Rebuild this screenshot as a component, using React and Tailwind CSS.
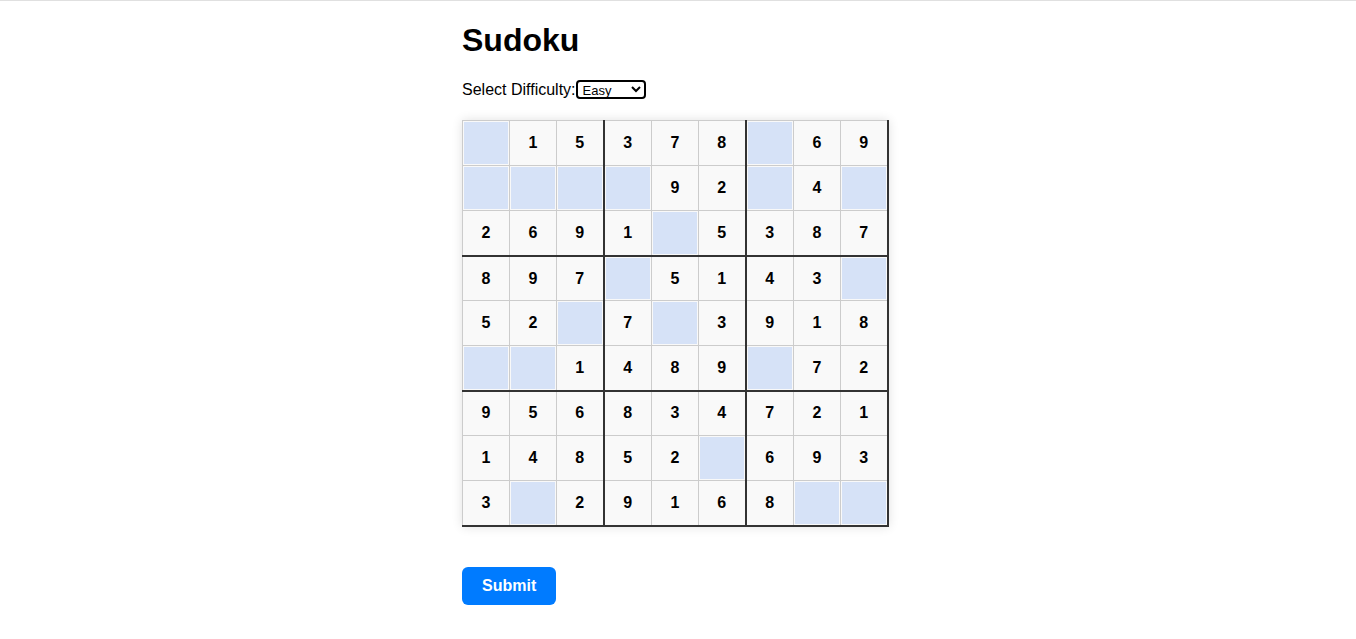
import { useState } from "react";

const puzzle = [
  [0, 1, 5, 3, 7, 8, 0, 6, 9],
  [0, 0, 0, 0, 9, 2, 0, 4, 0],
  [2, 6, 9, 1, 0, 5, 3, 8, 7],
  [8, 9, 7, 0, 5, 1, 4, 3, 0],
  [5, 2, 0, 7, 0, 3, 9, 1, 8],
  [0, 0, 1, 4, 8, 9, 0, 7, 2],
  [9, 5, 6, 8, 3, 4, 7, 2, 1],
  [1, 4, 8, 5, 2, 0, 6, 9, 3],
  [3, 0, 2, 9, 1, 6, 8, 0, 0],
];

export default function App() {
  const [difficulty, setDifficulty] = useState("easy");
  const [values, setValues] = useState({});

  return (
    <div className="min-h-screen bg-white border-t border-[#e0e0e0] font-['Liberation_Sans',Arial,sans-serif] text-black">
      <div className="w-[432px] mx-auto pt-[21px]">
        <h1 className="text-[32px] leading-[37px] font-bold">Sudoku</h1>

        {/* difficulty picker */}
        <div className="mt-[21px] flex items-center text-base leading-[18px]">
          <label htmlFor="difficulty">Select Difficulty:</label>
          <select
            id="difficulty"
            value={difficulty}
            onChange={(e) => setDifficulty(e.target.value)}
            className="w-[70px] h-[19px] border-2 border-black rounded-[4px] text-[13px] leading-[15px] bg-white pl-[1px] appearance-auto"
          >
            <option value="easy">Easy</option>
            <option value="medium">Medium</option>
            <option value="hard">Hard</option>
          </select>
        </div>

        <table className="mt-[21px] border-collapse shadow-[0_0_10px_rgba(0,0,0,0.12)]">
          <tbody>
            {puzzle.map((row, r) => (
              <tr key={r}>
                {row.map((n, c) => {
                  const thickRight = c % 3 === 2;
                  const thickBottom = r % 3 === 2;
                  const wide = c === 3 || c === 6;
                  const short = r === 3 || r === 6;
                  return (
                    <td
                      key={c}
                      className={`${wide ? "w-[48px]" : "w-[47px]"} ${short ? "h-[44px]" : "h-[45px]"} p-px text-center align-middle bg-[#f9f9f9] border border-[#ccc] text-base font-bold ${
                        thickRight ? "border-r-2 border-r-[#333]" : ""
                      } ${thickBottom ? "border-b-2 border-b-[#333]" : ""}`}
                    >
                      {n === 0 ? (
                        <input
                          type="text"
                          maxLength={1}
                          value={values[`${r}-${c}`] || ""}
                          onChange={(e) =>
                            setValues({ ...values, [`${r}-${c}`]: e.target.value })
                          }
                          className={`block w-full ${short ? "h-[41px]" : "h-[42px]"} bg-[#d6e2f7] text-center text-base font-bold outline-none`}
                        />
                      ) : (
                        n
                      )}
                    </td>
                  );
                })}
              </tr>
            ))}
          </tbody>
        </table>

        <button className="mt-[40px] h-[38px] px-[20px] bg-[#007bff] text-white font-bold text-base rounded-[6px]">
          Submit
        </button>
      </div>
    </div>
  );
}
